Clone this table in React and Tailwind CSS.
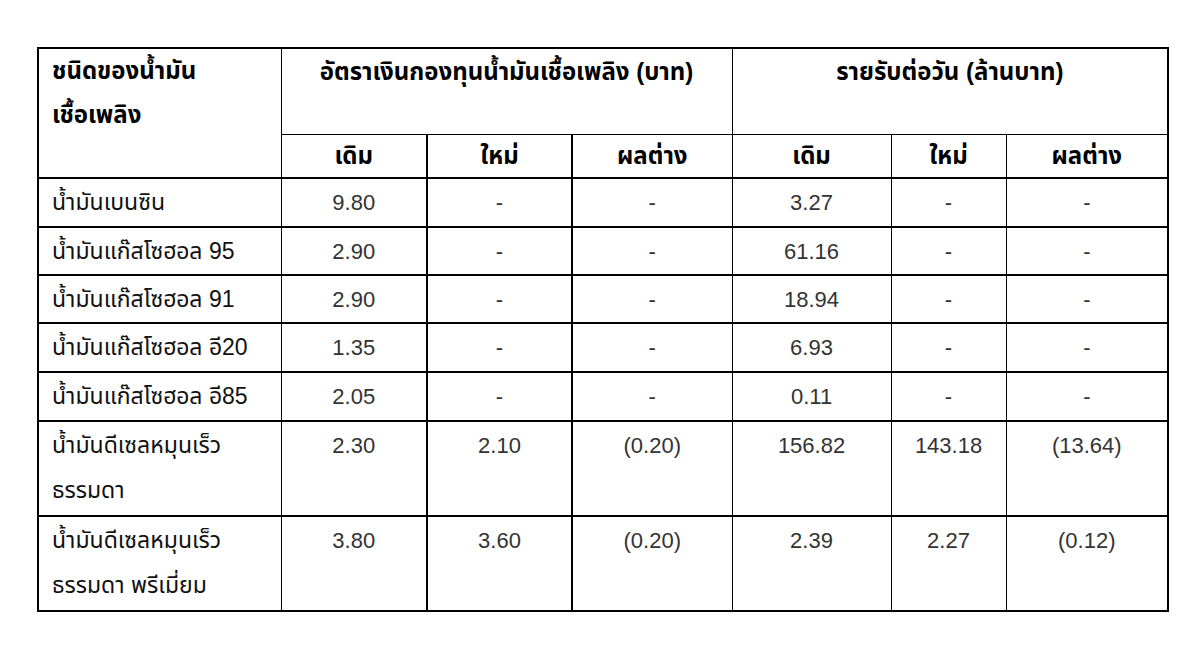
import React from 'react';

const rows = [
  { name: ['น้ำมันเบนซิน'], vals: ['9.80', '-', '-', '3.27', '-', '-'], h: 'h-[49px]' },
  { name: ['น้ำมันแก๊สโซฮอล 95'], vals: ['2.90', '-', '-', '61.16', '-', '-'], h: 'h-[48px]' },
  { name: ['น้ำมันแก๊สโซฮอล 91'], vals: ['2.90', '-', '-', '18.94', '-', '-'], h: 'h-[48px]' },
  { name: ['น้ำมันแก๊สโซฮอล อี20'], vals: ['1.35', '-', '-', '6.93', '-', '-'], h: 'h-[49px]' },
  { name: ['น้ำมันแก๊สโซฮอล อี85'], vals: ['2.05', '-', '-', '0.11', '-', '-'], h: 'h-[49px]' },
  { name: ['น้ำมันดีเซลหมุนเร็ว', 'ธรรมดา'], vals: ['2.30', '2.10', '(0.20)', '156.82', '143.18', '(13.64)'], h: 'h-[95px]' },
  { name: ['น้ำมันดีเซลหมุนเร็ว', 'ธรรมดา พรีเมี่ยม'], vals: ['3.80', '3.60', '(0.20)', '2.39', '2.27', '(0.12)'], h: 'h-[95px]' },
];

const font = { fontFamily: '"Liberation Sans", "Noto Sans Thai", "Noto Sans", "DejaVu Sans", sans-serif' };

export default function App() {
  return (
    <div className="min-h-[648px] w-[1200px] bg-white pt-[47px] pl-[37px]" style={font}>
      <table className="border-collapse border-2 border-black text-black table-fixed w-[1130px]">
        <colgroup>
          <col className="w-[243px]" />
          <col className="w-[146px]" />
          <col className="w-[145px]" />
          <col className="w-[160px]" />
          <col className="w-[159px]" />
          <col className="w-[115px]" />
          <col className="w-[162px]" />
        </colgroup>
        <thead>
          <tr className="h-[86px]">
            <td rowSpan={2} className="border-l-2 border-r border-y-2 border-black align-top pl-[13px] pt-0 text-[24px] font-bold leading-[44px]">
              ชนิดของน้ำมัน<br />เชื้อเพลิง
            </td>
            <td colSpan={3} className="border-x border-t-2 border-black align-top text-center text-[24px] font-bold leading-[46px]">
              อัตราเงินกองทุนน้ำมันเชื้อเพลิง (บาท)
            </td>
            <td colSpan={3} className="border-x border-t-2 border-black align-top text-center text-[24px] font-bold leading-[46px]">
              รายรับต่อวัน (ล้านบาท)
            </td>
          </tr>
          <tr className="h-[44px]">
            {['เดิม', 'ใหม่', 'ผลต่าง', 'เดิม', 'ใหม่', 'ผลต่าง'].map((t, i) => (
              <td key={i} className={`border-t border-b-2 border-black text-center text-[24px] font-bold leading-[38px] ${i === 1 ? 'border-x-2' : 'border-x'}`}>
                {t}
              </td>
            ))}
          </tr>
        </thead>
        <tbody>
          {rows.map((r, i) => (
            <tr key={i} className={r.h}>
              <td className="border-l-2 border-r border-y-2 border-black align-top pl-[13px] pt-px text-[23px] text-[#111] leading-[45px]">
                {r.name.map((n, j) => (
                  <div key={j}>{n}</div>
                ))}
              </td>
              {r.vals.map((v, j) => (
                <td key={j} className={`border-y-2 border-black align-top text-center pt-px text-[22px] text-[#333] leading-[45px] ${j === 1 ? 'border-x-2' : 'border-x'}`}>
                  {v}
                </td>
              ))}
            </tr>
          ))}
        </tbody>
      </table>
    </div>
  );
}
